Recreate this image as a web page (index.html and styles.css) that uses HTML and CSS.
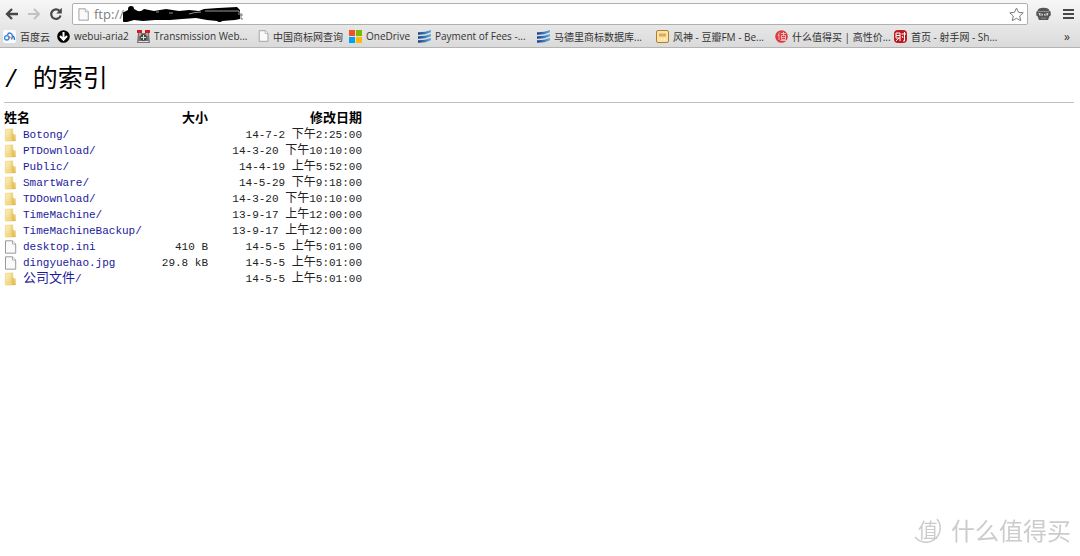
FILE: index.html
```html
<!DOCTYPE html>
<html lang="zh-CN">
<head>
<meta charset="utf-8">
<title>/ 的索引</title>
<link rel="stylesheet" href="styles.css">
</head>
<body>
<svg class="defs" aria-hidden="true">
  <defs>
    <linearGradient id="gold" x2="1" y2="1"><stop stop-color="#fdf2bd"/><stop offset="1" stop-color="#e8c660"/></linearGradient>
    <linearGradient id="blue"><stop stop-color="#173f88"/><stop offset="1" stop-color="#5cabe0"/></linearGradient>
    <symbol id="folder" viewBox="0 0 13 14"><path d="M1.300 1.500 8.800.8V6l2.800 1v5.600H8.800v.6L1.300 12.800z" fill="url(#gold)" stroke="#e6cd78" stroke-width=".6"/><path d="M8 1.200 6.800 2v11l2-.6V6z" fill="#f0d27a"/><path d="M9 6.200v6.200h2.500" fill="none" stroke="#d3a93c" stroke-width=".8"/></symbol>
    <symbol id="page" viewBox="0 0 12 14"><path d="M1 .8h7l3.200 3.200v9.200H1z" fill="#fafafa" stroke="#999"/><path d="M8 .8V4h3.200" fill="#fff" stroke="#999" stroke-width=".8"/></symbol>
    <symbol id="waves" viewBox="0 0 13 13"><path d="M0 2.300Q7 2.500 13 0v2.200Q7 5 0 4.800zM0 6.300Q7 6.500 13 4v2.200Q7 9 0 8.800zM0 10.300Q7 10.500 13 8v2.200Q7 13 0 12.800z" fill="url(#blue)"/></symbol>
  </defs>
</svg>
<header class="chrome">
  <div class="toolbar">
    <button class="tool" aria-label="后退"><svg width="14" height="14" viewBox="0 0 14 14"><path d="M13 7H2.500M7 2 2 7l5 5" fill="none" stroke="#484848" stroke-width="2.300"/></svg></button>
    <button class="tool" aria-label="前进" disabled><svg width="14" height="14" viewBox="0 0 14 14"><path d="M1 7h10.500M7 2l5 5-5 5" fill="none" stroke="#c2c2c2" stroke-width="2"/></svg></button>
    <button class="tool" aria-label="重新加载"><svg width="14" height="14" viewBox="0 0 14 14"><path d="M10.500 3.800A4.800 4.800 0 1 0 11.600 8.500" fill="none" stroke="#484848" stroke-width="2.200"/><path d="M12.800.8v5.700H7.300z" fill="#484848"/></svg></button>
    <div class="address">
      <svg width="11" height="13"><use href="#page"/></svg>
      <div class="url">
        <input type="text" value="ftp://" aria-label="地址">
        <svg class="scribble" width="121" height="17" viewBox="0 0 121 17"><path d="M5 5q4-3 8 0t8-1l10 2 12-2 13 2 10-1 10 1 5-2 14-1 19-1 3 3v9l-5 1-13 1-2 2-3-2-10-1-11-2-14 1-12 1-15 0-12 1-9-1-7 2q-8 0-7-4 3-2 2-5z" fill="#000"/><circle cx="8" cy="4" r="3"/><path d="M82 6h34v4" fill="none" stroke="#999"/><path d="M33 7h3M46 8h4M66 9q6-2 12-2" fill="none" stroke="#ccc" stroke-width=".7"/><path d="M118 8v6h2M117 10h3" fill="none" stroke="#777"/></svg>
      </div>
      <button class="star" aria-label="加入书签"><svg width="15" height="15" viewBox="0 0 15 15"><path d="m7.500 1 2 4.300 4.700.5-3.500 3.200 1 4.700-4.200-2.400-4.200 2.400 1-4.700L.8 5.800l4.700-.5z" fill="#fff" stroke="#7c7c7c"/></svg></button>
    </div>
    <button class="tool" aria-label="扩展程序"><svg width="15" height="14" viewBox="0 0 15 14"><path d="M1.500 4Q2 .8 7.500.8T13.500 4l1.200.8v3.700l-1.200.7L12 13H3L1.500 9.200.3 8.500V4.800z" fill="#555"/><path d="M2 4.500h11M5 11.200h5" stroke="#8d8d8d"/><path d="M2.500 6l4.300 1v1.500H3.500zM12.500 6l-4.300 1v1.500h3.300z" fill="#eee"/><path d="M5 6.800v1.500M10 6.800v1.500" stroke="#333"/></svg></button>
    <button class="tool" aria-label="菜单"><svg width="11" height="12" viewBox="0 0 11 12"><path d="M0 2h11M0 6h11M0 10h11" stroke="#484848" stroke-width="2.200"/></svg></button>
  </div>
  <nav class="bookmarks" aria-label="书签栏">
    <a href="#"><svg width="13" height="13" viewBox="0 0 13 13"><rect width="13" height="13" rx="2" fill="#f8fbff"/><circle cx="3.800" cy="7.800" r="2.200" fill="none" stroke="#3388e0" stroke-width="1.300"/><path d="M4.500 5Q5.500 2 8 3.500T8.500 9.500" fill="none" stroke="#2f78d5" stroke-width="1.300"/><path d="M9 6q2.500 0 2.500 4" fill="none" stroke="#2f78d5" stroke-width="1.300"/><path d="M5.500 6.500 7.500 8" stroke="#e25b66" stroke-width="1.500"/></svg>百度云</a>
    <a href="#"><svg width="13" height="13" viewBox="0 0 13 13"><circle cx="6.500" cy="6.500" r="6.300"/><path d="M6.500 2v7M3 6l3.500 3.700L10 6" fill="none" stroke="#fff" stroke-width="2"/></svg>webui-aria2</a>
    <a href="#"><svg width="13" height="13" viewBox="0 0 13 13"><path d="M1 3h11l1 10H0z" fill="#777"/><path d="M0 0h5v3H0zM8 0h5v3H8z" fill="#d71920"/><path d="M3 3v3M10 3v3M1.500 11.500h10" stroke="#ddd"/><circle cx="6.500" cy="7.500" r="3.200" fill="#444"/><path d="M6.500 5v5M4 7.500h5" stroke="#ddd"/></svg>Transmission Web...</a>
    <a href="#"><svg width="11" height="12"><use href="#page"/></svg>中国商标网查询</a>
    <a href="#"><svg width="13" height="13" viewBox="0 0 13 13"><path fill="#f05125" d="M0 0h6v6H0z"/><path fill="#7db900" d="M7 0h6v6H7z"/><path fill="#00a3ef" d="M0 7h6v6H0z"/><path fill="#ffb901" d="M7 7h6v6H7z"/></svg>OneDrive</a>
    <a href="#"><svg width="13" height="13"><use href="#waves"/></svg>Payment of Fees -...</a>
    <a href="#"><svg width="13" height="13"><use href="#waves"/></svg>马德里商标数据库...</a>
    <a href="#"><svg width="13" height="13" viewBox="0 0 13 13"><rect x=".5" y=".5" width="12" height="12" rx="1.500" fill="#ffe2a0" stroke="#a98038"/><path d="M3 3.500h7v3H3z" fill="#d2ad62"/><path d="M5 9.500h1M8 9.500h1" stroke="#fff"/></svg>风神 - 豆瓣FM - Be...</a>
    <a href="#"><svg width="13" height="13" viewBox="0 0 13 13"><circle cx="6.500" cy="6.500" r="6.300" fill="#d83b40"/><path d="M4.500 2.500 3 6M4 5v5M6 3.500h5M8.500 2v3M6.500 5.500h4v4h-4zM6.500 7.500h4M5.500 10.500h6" fill="none" stroke="#f8d0d0" stroke-width=".8"/></svg>什么值得买 | 高性价...</a>
    <a href="#"><svg width="13" height="13" viewBox="0 0 13 13"><rect width="13" height="13" rx="4" fill="#b81c20"/><path d="M2 3h4v8M2 3v5h4M2 5.500h4M5 8l-3 3M7.500 4H12M10.500 2v9H9M8 6l1 2" fill="none" stroke="#fff"/></svg>首页 - 射手网 - Sh...</a>
    <button class="more" aria-label="更多书签">»</button>
  </nav>
</header>
<main class="listing">
  <h1><span class="slash">/ </span>的索引</h1>
  <table>
    <thead><tr><th class="name">姓名</th><th class="size">大小</th><th class="date">修改日期</th></tr></thead>
    <tbody>
      <tr><td><a href="#"><svg width="13" height="14"><use href="#folder"/></svg>Botong/</a></td><td></td><td>14-7-2 <span class="han">下午</span>2:25:00</td></tr>
      <tr><td><a href="#"><svg width="13" height="14"><use href="#folder"/></svg>PTDownload/</a></td><td></td><td>14-3-20 <span class="han">下午</span>10:10:00</td></tr>
      <tr><td><a href="#"><svg width="13" height="14"><use href="#folder"/></svg>Public/</a></td><td></td><td>14-4-19 <span class="han">上午</span>5:52:00</td></tr>
      <tr><td><a href="#"><svg width="13" height="14"><use href="#folder"/></svg>SmartWare/</a></td><td></td><td>14-5-29 <span class="han">下午</span>9:18:00</td></tr>
      <tr><td><a href="#"><svg width="13" height="14"><use href="#folder"/></svg>TDDownload/</a></td><td></td><td>14-3-20 <span class="han">下午</span>10:10:00</td></tr>
      <tr><td><a href="#"><svg width="13" height="14"><use href="#folder"/></svg>TimeMachine/</a></td><td></td><td>13-9-17 <span class="han">上午</span>12:00:00</td></tr>
      <tr><td><a href="#"><svg width="13" height="14"><use href="#folder"/></svg>TimeMachineBackup/</a></td><td></td><td>13-9-17 <span class="han">上午</span>12:00:00</td></tr>
      <tr><td><a href="#"><svg width="13" height="14"><use href="#page"/></svg>desktop.ini</a></td><td>410 B</td><td>14-5-5 <span class="han">上午</span>5:01:00</td></tr>
      <tr><td><a href="#"><svg width="13" height="14"><use href="#page"/></svg>dingyuehao.jpg</a></td><td>29.8 kB</td><td>14-5-5 <span class="han">上午</span>5:01:00</td></tr>
      <tr><td><a href="#"><svg width="13" height="14"><use href="#folder"/></svg><span><span class="han">公司文件</span>/</span></a></td><td></td><td>14-5-5 <span class="han">上午</span>5:01:00</td></tr>
    </tbody>
  </table>
</main>
<div class="watermark"><span class="seal"><svg width="30" height="32" viewBox="0 0 30 32"><path d="M2 23A14 14 0 1 0 24 5" fill="none" stroke="#ccc" stroke-width="1.500"/></svg><span class="seal-text">值</span></span>什么值得买</div>
</body>
</html>
```
FILE: styles.css
```css
* { box-sizing: border-box; }
body {
  margin: 0;
  background: #fff;
  color: #222;
  font-family: "Liberation Mono", "Noto Sans CJK SC", monospace;
  font-size: 11px;
}
.defs { position: absolute; width: 0; height: 0; }
svg { flex: none; }
button { border: 0; padding: 0; background: none; display: flex; }
a { text-decoration: none; }

.chrome {
  background: linear-gradient(#f7f7f7, #dadada);
  border-bottom: 1px solid #b4b4b4;
  padding-top: 3px;
  font-family: "Open Sans", "Noto Sans CJK SC", sans-serif;
}
.toolbar {
  display: flex;
  align-items: center;
  gap: 8px;
  padding: 0 6px 0 5px;
}
.address {
  flex: 1;
  display: flex;
  align-items: center;
  gap: 5px;
  height: 22px;
  margin: 0 0 0 1px;
  padding: 0 3px 0 5px;
  background: #fff;
  border: 1px solid #b0b0b0;
  border-radius: 2px;
}
.address + .tool { margin: 0 4px 0 0; }
.url { flex: 1; position: relative; display: flex; }
.url input {
  width: 100%;
  height: 18px;
  padding: 0;
  border: 0;
  background: none;
  outline: 0;
  color: #808080;
  font-family: "Open Sans", sans-serif;
  font-size: 13px;
}
.scribble { position: absolute; left: 29px; top: 0; }

.bookmarks {
  display: grid;
  grid-template-columns: 54px 80px 121px 91px 69px 119px 119px 119px 119px 1fr auto;
  align-items: center;
  height: 22px;
  padding: 0 10px 0 3px;
  font-size: 10px;
}
.bookmarks a {
  display: flex;
  align-items: center;
  gap: 4px;
  color: #333;
  white-space: nowrap;
}
.more { color: #333; font: 12px "Open Sans", sans-serif; }

.listing { padding: 14px 6px 0 4px; }
h1 {
  margin: 0 0 8px;
  padding-bottom: 3px;
  border-bottom: 1px solid #c0c0c0;
  color: #000;
  font-size: 25px;
  font-weight: 400;
  line-height: 37px;
}
.slash { font-size: 24px; white-space: pre; }
table { border-collapse: collapse; line-height: 16px; }
th, td { height: 16px; padding: 0; text-align: right; white-space: nowrap; }
th { color: #000; font-size: 13px; font-weight: 700; }
th.name, td:first-child { text-align: left; }
.name { width: 152px; }
.size { width: 52px; }
.date { width: 154px; }
td a { display: flex; align-items: center; gap: 6px; height: 16px; color: #1a1a9c; }
.han { font-size: 12px; line-height: 1; }
td a .han { font-size: 13px; }

.watermark {
  position: fixed;
  right: 9px;
  bottom: 8px;
  display: flex;
  align-items: center;
  gap: 8px;
  color: #ccc;
  font: 24px/36px "Noto Sans CJK SC", sans-serif;
}
.seal { display: grid; place-items: center; font-size: 20px; line-height: 30px; }
.seal > * { grid-area: 1 / 1; }
```
